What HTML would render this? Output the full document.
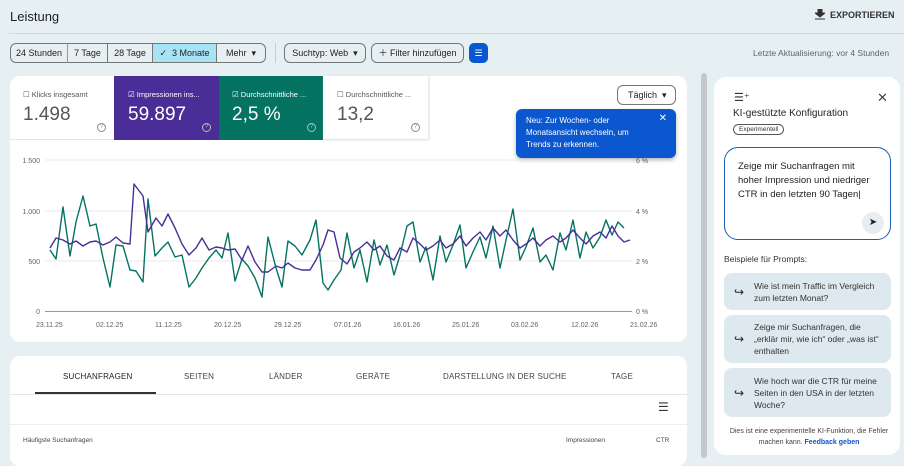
<!DOCTYPE html>
<html><head><meta charset="utf-8"><style>
*{box-sizing:border-box;margin:0;padding:0}
body{width:904px;height:458px;overflow:hidden;background:#e6f0f3;font-family:"Liberation Sans",sans-serif;color:#1f1f1f;position:relative}
.a{position:absolute}
.btn{position:absolute;top:43px;height:20px;border:1px solid #747775;font-size:9px;line-height:18px;text-align:center;background:#e6f0f3}
.card{background:#fff;border-radius:10px}
.tab{position:absolute;top:372px;font-size:8px;color:#444;letter-spacing:.2px}
.pr{position:absolute;left:724px;width:167px;background:#dde9ee;border-radius:8px;font-size:8.5px;line-height:12px;color:#333;padding-left:30px;padding-right:6px;display:flex;align-items:center}
.pr:before{content:"↪";position:absolute;left:10px;font-size:12px;color:#222}
.q{position:absolute;top:123px;width:9px;height:9px;border:1px solid;border-radius:50%;font-size:6px;line-height:7px;text-align:center}
</style></head><body>
<div class="a" style="left:10px;top:9px;font-size:13px">Leistung</div>
<div class="a" style="left:815px;top:9px;font-size:9px;font-weight:bold;color:#333">
<svg width="10" height="11" style="vertical-align:-2px;margin-right:5px"><path d="M3 0h4v4h3L5 8 0 4h3z M0 10h10" fill="#333" stroke="#333" stroke-width="1"/></svg>EXPORTIEREN</div>
<div class="a" style="left:9px;top:33px;width:895px;height:1px;background:#cfdadd"></div>

<div class="btn" style="left:10px;width:58px;border-radius:6px 0 0 6px">24 Stunden</div>
<div class="btn" style="left:67px;width:41px;border-left:1px solid #999">7 Tage</div>
<div class="btn" style="left:107px;width:46px;">28 Tage</div>
<div class="btn" style="left:152px;width:65px;background:#a8e2f5">✓&nbsp; 3 Monate</div>
<div class="btn" style="left:216px;width:50px;border-radius:0 6px 6px 0">Mehr &nbsp;▾</div>
<div class="a" style="left:275px;top:43px;width:1px;height:20px;background:#c5cfd2"></div>
<div class="btn" style="left:284px;width:82px;border-radius:6px">Suchtyp: Web &nbsp;▾</div>
<div class="btn" style="left:371px;width:93px;border-radius:6px">＋ Filter hinzufügen</div>
<div class="a" style="left:469px;top:43px;width:19px;height:20px;background:#0b57d0;border-radius:5px;color:#fff;font-size:9px;text-align:center;line-height:20px">☰</div>
<div class="a" style="left:753px;top:48px;font-size:8.5px;color:#5f6368">Letzte Aktualisierung: vor 4 Stunden</div>

<div class="a card" style="left:10px;top:76px;width:677px;height:266px"></div>
<div class="a" style="left:10px;top:76px;width:104px;height:64px;background:#fff;border-radius:10px 0 0 0;border-bottom:1px solid #e5e5e5"></div>
<div class="a" style="left:23px;top:90px;font-size:7.5px;color:#555">☐ Klicks insgesamt</div>
<div class="a" style="left:23px;top:104px;font-size:19px;color:#555">1.498</div>
<div class="a" style="left:114px;top:76px;width:105px;height:64px;background:#4a2d96"></div>
<div class="a" style="left:128px;top:90px;font-size:7.5px;color:#fff">☑ Impressionen ins...</div>
<div class="a" style="left:128px;top:104px;font-size:19px;color:#fff">59.897</div>
<div class="a" style="left:219px;top:76px;width:104px;height:64px;background:#047361"></div>
<div class="a" style="left:232px;top:90px;font-size:7.5px;color:#fff">☑ Durchschnittliche ...</div>
<div class="a" style="left:232px;top:104px;font-size:19px;color:#fff">2,5 %</div>
<div class="a" style="left:323px;top:76px;width:105px;height:64px;background:#fff;border-bottom:1px solid #e5e5e5;box-shadow:1px 0 2px #ddd"></div>
<div class="a" style="left:337px;top:90px;font-size:7.5px;color:#555">☐ Durchschnittliche ...</div>
<div class="a" style="left:337px;top:104px;font-size:19px;color:#555">13,2</div>
<div class="q" style="left:97px;color:#888">?</div>
<div class="q" style="left:202px;color:#bbb">?</div>
<div class="q" style="left:307px;color:#8cc">?</div>
<div class="q" style="left:411px;color:#888">?</div>

<div class="a" style="left:617px;top:85px;width:59px;height:20px;border:1px solid #777;border-radius:6px;font-size:9px;line-height:18px;padding-left:10px">Täglich &nbsp;▾</div>
<div class="a" style="left:516px;top:109px;width:160px;height:49px;background:#0b57d0;border-radius:6px;color:#fff;font-size:8px;line-height:12px;padding:6px 40px 0 10px;box-shadow:0 2px 4px rgba(0,0,0,.3)">Neu: Zur Wochen- oder Monatsansicht wechseln, um Trends zu erkennen.<span style="position:absolute;right:9px;top:4px;font-size:10px">✕</span></div>

<svg class="a" style="left:0;top:150px" width="690" height="185">
<g stroke="#e8e8e8" stroke-width="1"><line x1="45" y1="10" x2="632" y2="10"/><line x1="45" y1="61" x2="632" y2="61"/><line x1="45" y1="111" x2="632" y2="111"/></g>
<line x1="45" y1="161.5" x2="632" y2="161.5" stroke="#999" stroke-width="1"/>
<g font-size="7" fill="#5f6368" font-family="Liberation Sans">
<text x="40" y="13" text-anchor="end">1.500</text><text x="40" y="64" text-anchor="end">1.000</text><text x="40" y="114" text-anchor="end">500</text><text x="40" y="164" text-anchor="end">0</text>
<text x="636" y="13">6 %</text><text x="636" y="64">4 %</text><text x="636" y="114">2 %</text><text x="636" y="164">0 %</text>
<text x="36" y="177">23.11.25</text><text x="96" y="177">02.12.25</text><text x="155" y="177">11.12.25</text><text x="214" y="177">20.12.25</text><text x="274" y="177">29.12.25</text><text x="334" y="177">07.01.26</text><text x="393" y="177">16.01.26</text><text x="452" y="177">25.01.26</text><text x="511" y="177">03.02.26</text><text x="571" y="177">12.02.26</text><text x="630" y="177">21.02.26</text></g>
<g transform="translate(0,-150)" fill="none" stroke-width="1.4" stroke-linejoin="round">
<polyline stroke="#047361" points="50,250 56,259 63,207 70,256 76,222 83,196 90,226 96,224 103,258 110,287 116,245 123,246 130,270 136,271 143,282 148,199 155,256 162,248 168,242 175,257 182,255 189,287 196,278 202,268 209,258 216,250 222,258 228,233 235,281 242,259 248,266 255,278 262,297 268,237 276,268 282,287 288,241 295,246 302,255 310,240 316,220 323,283 328,290 334,280 341,270 347,233 354,268 360,250 367,282 374,240 380,265 387,245 394,275 400,255 407,226 413,222 420,262 426,247 433,280 440,236 446,262 453,245 460,225 466,268 473,252 480,237 486,258 493,226 500,268 506,240 513,209 520,260 526,247 533,228 540,262 546,255 553,270 560,233 566,250 573,220 580,258 586,232 593,248 600,237 606,220 612,235 618,222 624,228"/>
<polyline stroke="#4a2d96" points="50,248 56,238 63,240 70,244 76,241 83,246 90,242 96,241 103,245 110,242 116,237 123,243 130,244 134,184 143,196 148,232 156,218 162,226 168,214 175,228 182,244 189,255 196,248 202,238 209,250 216,247 222,248 228,250 235,249 242,260 248,246 255,262 262,272 268,272 276,266 282,268 288,263 295,268 302,270 310,270 316,260 323,245 328,230 334,232 340,258 347,264 354,252 360,248 367,242 374,250 380,246 387,256 394,260 400,248 407,252 413,238 420,244 426,250 433,246 440,240 446,248 453,244 460,236 466,246 473,238 480,232 486,240 493,228 500,236 506,230 513,240 520,248 526,244 533,238 540,246 546,240 553,236 560,242 566,238 573,230 580,238 586,244 593,236 600,232 606,238 612,226 618,236 624,242 630,240"/>
</g></svg>

<div class="a card" style="left:10px;top:356px;width:677px;height:110px"></div>
<div class="tab" style="left:63px;color:#222">SUCHANFRAGEN</div>
<div class="tab" style="left:184px">SEITEN</div>
<div class="tab" style="left:269px">LÄNDER</div>
<div class="tab" style="left:356px">GERÄTE</div>
<div class="tab" style="left:443px">DARSTELLUNG IN DER SUCHE</div>
<div class="tab" style="left:611px">TAGE</div>
<div class="a" style="left:35px;top:392px;width:121px;height:2px;background:#333"></div>
<div class="a" style="left:10px;top:394px;width:677px;height:1px;background:#e5e5e5"></div>
<div class="a" style="left:658px;top:400px;font-size:12px;color:#333">☰</div>
<div class="a" style="left:10px;top:424px;width:677px;height:1px;background:#eee"></div>
<div class="a" style="left:23px;top:437px;font-size:6.5px;color:#444">Häufigste Suchanfragen</div>
<div class="a" style="left:566px;top:437px;font-size:6.5px;color:#444">Impressionen</div>
<div class="a" style="left:656px;top:437px;font-size:6.5px;color:#444">CTR</div>

<div class="a" style="left:701px;top:73px;width:6px;height:385px;background:#c4c8ca;border-radius:3px"></div>
<div class="a card" style="left:714px;top:77px;width:186px;height:378px;border-radius:12px"></div>
<div class="a" style="left:734px;top:91px;font-size:11px;color:#333">☰⁺</div>
<div class="a" style="left:877px;top:90px;font-size:13px;color:#444">✕</div>
<div class="a" style="left:733px;top:108px;font-size:10px;color:#222">KI-gestützte Konfiguration</div>
<div class="a" style="left:733px;top:124px;font-size:6.5px;border:1px solid #555;border-radius:7px;padding:1px 5px;color:#333">Experimentell</div>
<div class="a" style="left:724px;top:147px;width:167px;height:93px;border:1.5px solid #1a5fb4;border-radius:14px;padding:12px 13px;font-size:9.5px;line-height:14px;color:#222">Zeige mir Suchanfragen mit hoher Impression und niedriger CTR in den letzten 90 Tagen|</div>
<div class="a" style="left:862px;top:212px;width:22px;height:22px;border-radius:11px;background:#e6eef2;font-size:10px;text-align:center;line-height:22px">➤</div>
<div class="a" style="left:724px;top:254px;font-size:8.5px;color:#333">Beispiele für Prompts:</div>
<div class="pr" style="top:273px;height:37px">Wie ist mein Traffic im Vergleich zum letzten Monat?</div>
<div class="pr" style="top:315px;height:48px">Zeige mir Suchanfragen, die „erklär mir, wie ich“ oder „was ist“ enthalten</div>
<div class="pr" style="top:368px;height:49px">Wie hoch war die CTR für meine Seiten in den USA in der letzten Woche?</div>
<div class="a" style="left:720px;top:426px;width:178px;font-size:7px;line-height:11px;color:#444;text-align:center">Dies ist eine experimentelle KI-Funktion, die Fehler machen kann. <b style="color:#0b57d0">Feedback geben</b></div>
</body></html>
